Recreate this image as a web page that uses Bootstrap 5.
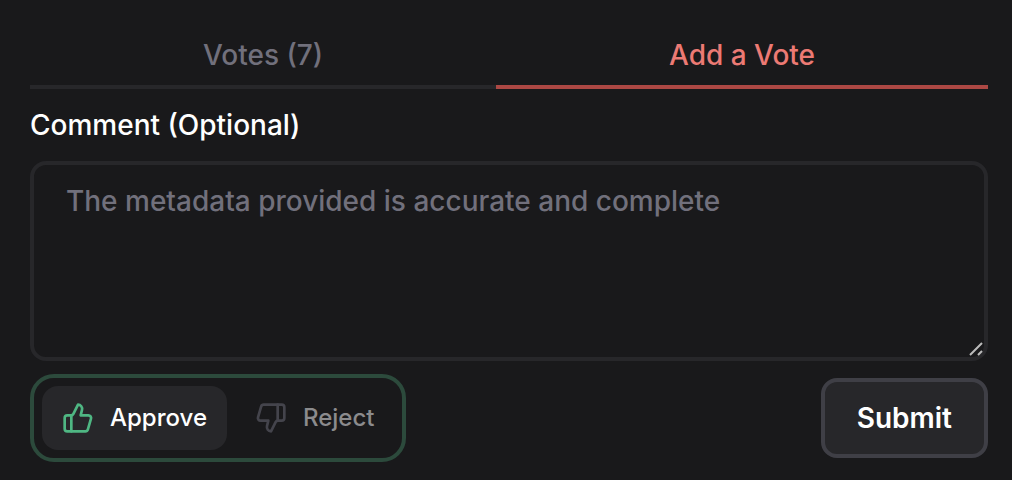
<!DOCTYPE html>
<html lang="en" data-bs-theme="dark">
<head>
<meta charset="utf-8">
<meta name="viewport" content="width=device-width, initial-scale=1">
<title>Add a Vote</title>
<link rel="stylesheet" href="https://cdn.jsdelivr.net/npm/bootstrap@5.3.0/dist/css/bootstrap.min.css">
<style>
  body { background: #19191b; color: #fff; font-family: Inter, "Liberation Sans", sans-serif; font-size: 28px; font-weight: 500; line-height: 40px; }
  .vote-panel { padding: 24px 24px 14px 30px; }
  .vote-tabs .nav-link { border: 0; border-bottom: 4px solid #27272a; border-radius: 0; padding: 11px 0 10px; background: none; color: #71707c; font-weight: 500; line-height: 40px; }
  .vote-tabs .nav-link.active { color: #ec7a74; border-color: #ac4844; }
  .comment-label { margin: 16px 0; }
  .comment-box { height: 200px; padding: 16px 32px; border: 4px solid #27272a; border-radius: 16px; background: #19191b; color: #fff; font-size: 28px; font-weight: 500; line-height: 40px; resize: vertical; }
  .comment-box::placeholder { color: #71707c; opacity: 1; }
  .comment-box::-webkit-resizer { background: url("data:image/svg+xml,%3Csvg xmlns='http://www.w3.org/2000/svg' width='15' height='15'%3E%3Cpath d='M1 13 13 1M9 13l4-4' stroke='%23bbb' stroke-width='2'/%3E%3C/svg%3E") no-repeat right bottom; }
  .vote-actions { margin-top: 13px; }
  .choice { padding: 8px; border: 4px solid #2c4a3c; border-radius: 24px; }
  .choice .btn { display: flex; align-items: center; gap: 16px; padding: 12px 20px; border: 0; border-radius: 16px; color: #8b8b8d; font-size: 24px; font-weight: 500; line-height: 40px; }
  .choice .btn svg { color: #44444c; }
  .choice .btn.active { background: #27272a; color: #fff; }
  .choice .btn.active svg { color: #4fb783; }
  .submit-btn { padding: 16px 32px; border: 4px solid #3f3f46; border-radius: 16px; background: #27272a; color: #fff; font-size: 28px; font-weight: 600; line-height: 40px; }
</style>
</head>
<body>
<main class="vote-panel">
  <div class="nav nav-fill vote-tabs" role="tablist">
    <button type="button" class="nav-link flex-fill" role="tab" aria-selected="false">Votes (7)</button>
    <button type="button" class="nav-link flex-fill active" role="tab" aria-selected="true">Add a Vote</button>
  </div>
  <form>
    <label for="comment" class="d-block comment-label">Comment (Optional)</label>
    <textarea id="comment" class="form-control comment-box" placeholder="The metadata provided is accurate and complete"></textarea>
    <div class="d-flex justify-content-between align-items-center vote-actions">
      <div class="d-flex gap-2 choice" role="group" aria-label="Your vote">
        <button type="button" class="btn active" aria-pressed="true">
          <svg width="32" height="32" viewBox="0 0 24 24" fill="none" stroke="currentColor" stroke-width="2" stroke-linecap="round" stroke-linejoin="round" aria-hidden="true"><path d="M7 10v12"/><path d="M15 5.88 14 10h5.83a2 2 0 0 1 1.92 2.56l-2.33 8A2 2 0 0 1 17.5 22H4a2 2 0 0 1-2-2v-8a2 2 0 0 1 2-2h2.76a2 2 0 0 0 1.79-1.11L12 2a3.13 3.13 0 0 1 3 3.88Z"/></svg>
          Approve
        </button>
        <button type="button" class="btn" aria-pressed="false">
          <svg width="32" height="32" viewBox="0 0 24 24" fill="none" stroke="currentColor" stroke-width="2" stroke-linecap="round" stroke-linejoin="round" aria-hidden="true"><path d="M17 14V2"/><path d="M9 18.12 10 14H4.17a2 2 0 0 1-1.92-2.56l2.33-8A2 2 0 0 1 6.5 2H20a2 2 0 0 1 2 2v8a2 2 0 0 1-2 2h-2.76a2 2 0 0 0-1.79 1.11L12 22a3.13 3.13 0 0 1-3-3.88Z"/></svg>
          Reject
        </button>
      </div>
      <button type="submit" class="btn submit-btn">Submit</button>
    </div>
  </form>
</main>
<script src="https://cdn.jsdelivr.net/npm/bootstrap@5.3.0/dist/js/bootstrap.bundle.min.js"></script>
</body>
</html>
